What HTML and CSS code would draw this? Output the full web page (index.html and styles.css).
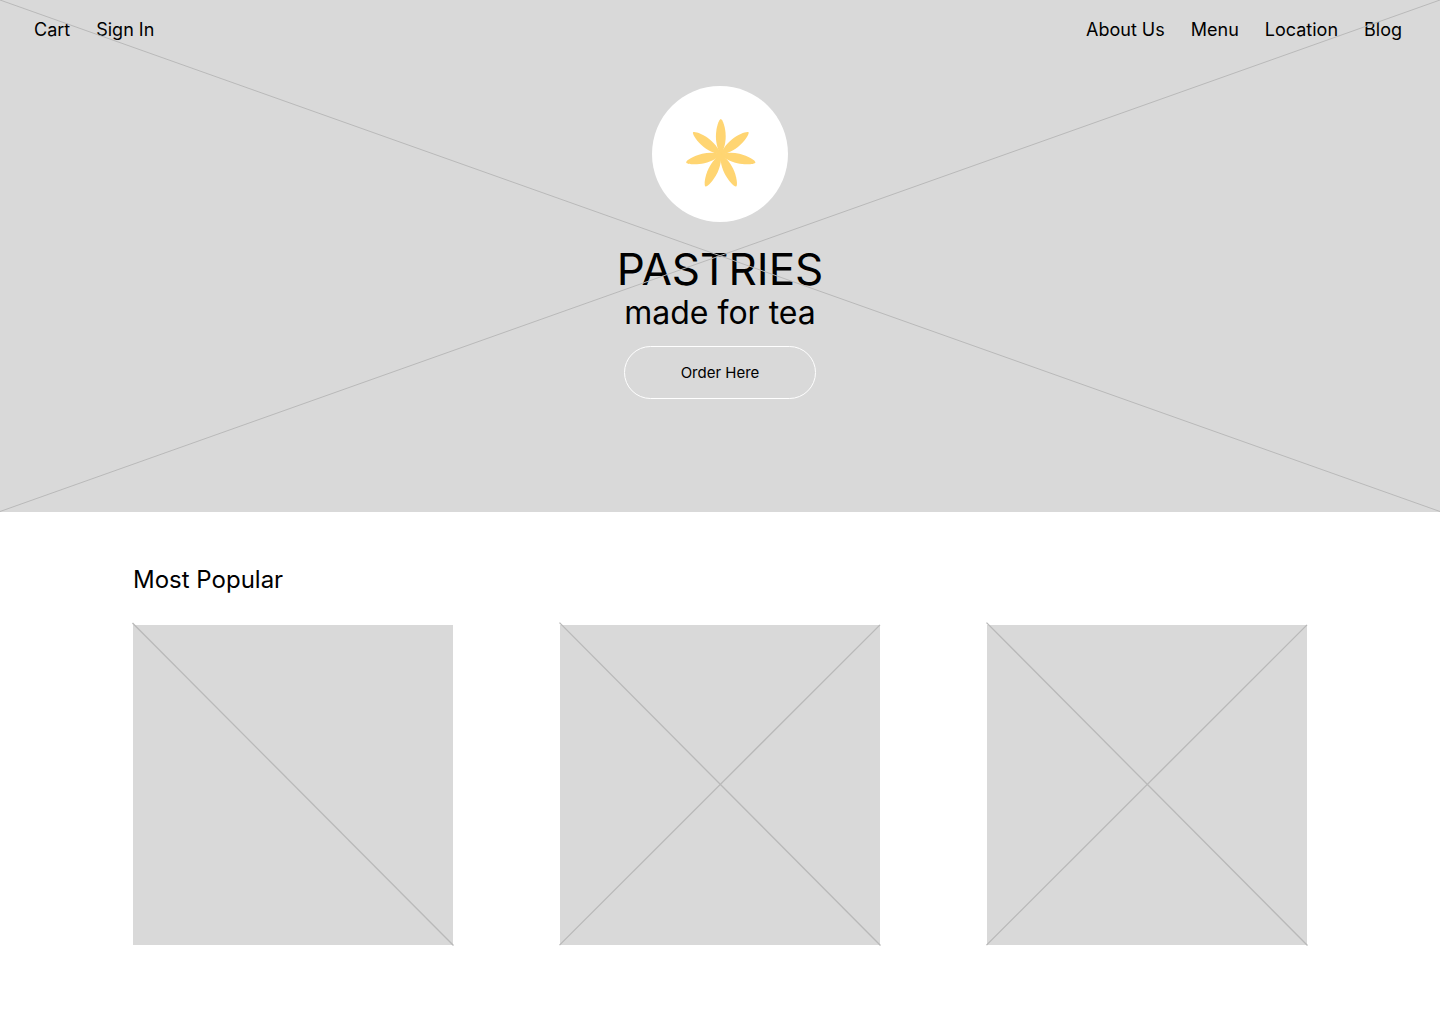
FILE: index.html
```html
<!DOCTYPE html>
<html lang="en">
<head>
  <meta charset="utf-8">
  <meta name="viewport" content="width=device-width, initial-scale=1">
  <title>Pastries made for tea</title>
  <link rel="stylesheet" href="styles.css">
</head>
<body>
  <header class="hero">
    <nav class="nav" aria-label="Main">
      <div class="nav-group">
        <a href="#cart">Cart</a>
        <a href="#sign-in">Sign In</a>
      </div>
      <div class="nav-group">
        <a href="#about">About Us</a>
        <a href="#menu">Menu</a>
        <a href="#location">Location</a>
        <a href="#blog">Blog</a>
      </div>
    </nav>
    <div class="intro">
      <div class="logo">
        <svg viewBox="-68 -68 136 136" aria-hidden="true">
          <defs>
            <path id="petal" d="M0 1C-2.200-3-4.900-10-4.900-18C-4.900-27-1.800-35.500 0-35.500C1.800-35.500 4.900-27 4.900-18C4.900-10 2.200-3 0 1Z"/>
          </defs>
          <g class="flower" transform="translate(.8 .5)">
            <use href="#petal"/>
            <use href="#petal" transform="rotate(51.43)"/>
            <use href="#petal" transform="rotate(102.86)"/>
            <use href="#petal" transform="rotate(154.29)"/>
            <use href="#petal" transform="rotate(205.71)"/>
            <use href="#petal" transform="rotate(257.14)"/>
            <use href="#petal" transform="rotate(308.57)"/>
          </g>
        </svg>
      </div>
      <h1 class="title">PASTRIES</h1>
      <p class="tagline">made for tea</p>
      <button class="order" type="button">Order Here</button>
    </div>
    <svg class="cross" viewBox="0 0 1440 512" preserveAspectRatio="none" aria-hidden="true">
      <path d="M0 0L1440 511.500M0 511.500L1440 0"/>
    </svg>
  </header>
  <main class="popular">
    <h2 class="heading">Most Popular</h2>
    <div class="cards">
      <div class="card">
        <svg class="cross" viewBox="0 0 320 320" aria-hidden="true"><path stroke-width="1.330" d="M-.5-2L320.500 320.500"/></svg>
      </div>
      <div class="card">
        <svg class="cross" viewBox="0 0 320 320" aria-hidden="true"><path stroke-width="1.330" d="M-.5-2.400L320.500 320.500M-.5 320.100L320-.1"/></svg>
      </div>
      <div class="card">
        <svg class="cross" viewBox="0 0 320 320" aria-hidden="true"><path stroke-width="1.330" d="M-.5-2.400L320.500 320.500M-.5 320.100L320-.1"/></svg>
      </div>
    </div>
  </main>
</body>
</html>
```
FILE: styles.css
```css
* {
  box-sizing: border-box;
}

body {
  margin: 0;
  background: #fff;
  color: #000;
  font-family: Inter, "Liberation Sans", sans-serif;
}

.hero {
  position: relative;
  min-height: 512px;
  background: #d9d9d9;
}

.nav {
  display: flex;
  justify-content: space-between;
  padding: 18px 38px 0 34px;
}

.nav-group {
  display: flex;
  gap: 26px;
}

.nav a {
  color: inherit;
  font-size: 18px;
  line-height: 24px;
  text-decoration: none;
}

.intro {
  display: flex;
  flex-direction: column;
  align-items: center;
  padding-top: 44px;
}

.logo {
  width: 136px;
  height: 136px;
  margin-bottom: 20px;
  border-radius: 50%;
  background: #fff;
}

.logo svg {
  display: block;
}

.flower {
  fill: #ffd572;
}

.title,
.tagline,
.heading {
  margin: 0;
  font-weight: 400;
}

.title {
  font-size: 44px;
  line-height: 54px;
}

.tagline {
  font-size: 32px;
  line-height: 34px;
}

.order {
  width: 192px;
  height: 53px;
  margin-top: 16px;
  border: 1px solid #fff;
  border-radius: 27px;
  background: transparent;
  color: inherit;
  font: inherit;
  font-size: 15px;
  cursor: pointer;
}

.cross {
  position: absolute;
  inset: 0;
  width: 100%;
  height: 100%;
  overflow: visible;
  fill: none;
  stroke: #b9b9b9;
  pointer-events: none;
}

.popular {
  max-width: 1440px;
  margin: 0 auto;
  padding: 52px 133px;
}

.heading {
  font-size: 24px;
  line-height: 32px;
}

.cards {
  display: grid;
  grid-template-columns: repeat(3, 1fr);
  gap: 107px;
  margin-top: 29px;
}

.card {
  position: relative;
  aspect-ratio: 1;
  background: #d9d9d9;
}
```
